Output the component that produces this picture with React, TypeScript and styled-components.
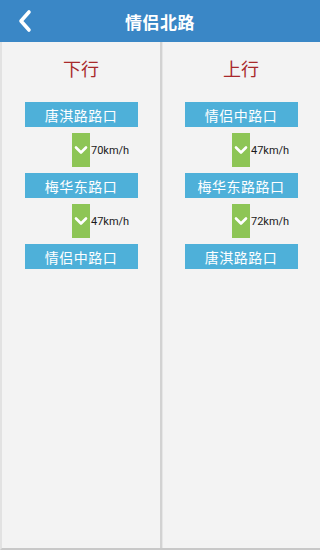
import React from "react";
import styled, { createGlobalStyle } from "styled-components";

const GlobalStyle = createGlobalStyle`
  html, body {
    margin: 0;
    padding: 0;
    background: #f3f3f3;
  }
  * {
    box-sizing: border-box;
  }
`;

const Page = styled.div`
  width: 320px;
  height: 550px;
  display: flex;
  flex-direction: column;
  font-family: Roboto, "Noto Sans CJK SC", sans-serif;
  background: #f3f3f3;
`;

const Header = styled.header`
  height: 42px;
  flex-shrink: 0;
  display: flex;
  align-items: center;
  justify-content: center;
  position: relative;
  background-color: #3a87c6;
  color: #ffffff;
`;

const Title = styled.h1`
  margin: 0;
  font-size: 17px;
  font-weight: bold;
  letter-spacing: 0.5px;
`;

const BackButton = styled.button`
  position: absolute;
  left: 14px;
  top: 8px;
  width: 22px;
  height: 26px;
  padding: 0;
  border: none;
  background: none;
  display: flex;
  align-items: center;
  justify-content: center;
  cursor: pointer;
`;

const Columns = styled.main`
  flex: 1;
  display: flex;
  border-left: 2px solid #e2e2e2;
  border-bottom: 2px solid #c8c8c8;
`;

const Column = styled.section<{ divider?: boolean }>`
  flex: 1;
  display: flex;
  flex-direction: column;
  align-items: center;
  padding-top: 18px;
  border-right: ${(p) => (p.divider ? "2px solid #d2d2d2" : "none")};
  box-shadow: ${(p) => (p.divider ? "1px 0 0 #e6e6e6" : "none")};
`;

const Direction = styled.h2`
  margin: 0 0 22px;
  font-size: 18px;
  line-height: 20px;
  font-weight: normal;
  color: #a8292b;
`;

const Stop = styled.div`
  width: 113px;
  height: 25px;
  display: flex;
  align-items: center;
  justify-content: center;
  background-color: #4eb0d9;
  color: #ffffff;
  font-size: 14px;
  letter-spacing: 0.5px;
`;

const Segment = styled.div`
  width: 100%;
  display: grid;
  grid-template-columns: 1fr 18px 1fr;
  align-items: center;
  margin: 6px 0;
`;

const Arrow = styled.div`
  grid-column: 2;
  height: 34px;
  display: flex;
  align-items: center;
  justify-content: center;
  background-color: #8dc556;
`;

const Speed = styled.span`
  grid-column: 3;
  padding-left: 1px;
  font-family: Roboto, Arial, sans-serif;
  font-size: 11px;
  color: #1a1a1a;
`;

type Route = {
  title: string;
  stops: string[];
  speeds: string[];
};

const routes: Route[] = [
  {
    title: "下行",
    stops: ["唐淇路路口", "梅华东路口", "情侣中路口"],
    speeds: ["70km/h", "47km/h"],
  },
  {
    title: "上行",
    stops: ["情侣中路口", "梅华东路路口", "唐淇路路口"],
    speeds: ["47km/h", "72km/h"],
  },
];

function ChevronDown() {
  return (
    <svg width="14" height="10" viewBox="0 0 14 10">
      <path
        d="M2 2.5 L7 7.5 L12 2.5"
        fill="none"
        stroke="#ffffff"
        strokeWidth="2.6"
        strokeLinecap="round"
        strokeLinejoin="round"
      />
    </svg>
  );
}

function App() {
  return (
    <Page>
      <GlobalStyle />
      <Header>
        <BackButton aria-label="back">
          <svg width="16" height="24" viewBox="0 0 16 24">
            <path
              d="M12 3 L4 12 L12 21"
              fill="none"
              stroke="#ffffff"
              strokeWidth="3.6"
              strokeLinecap="round"
              strokeLinejoin="round"
            />
          </svg>
        </BackButton>
        <Title>情侣北路</Title>
      </Header>
      <Columns>
        {routes.map((route, i) => (
          <Column key={route.title} divider={i === 0}>
            <Direction>{route.title}</Direction>
            {route.stops.map((stop, j) => (
              <React.Fragment key={stop + j}>
                <Stop>{stop}</Stop>
                {j < route.speeds.length && (
                  <Segment>
                    <Arrow>
                      <ChevronDown />
                    </Arrow>
                    <Speed>{route.speeds[j]}</Speed>
                  </Segment>
                )}
              </React.Fragment>
            ))}
          </Column>
        ))}
      </Columns>
    </Page>
  );
}

export default App;
